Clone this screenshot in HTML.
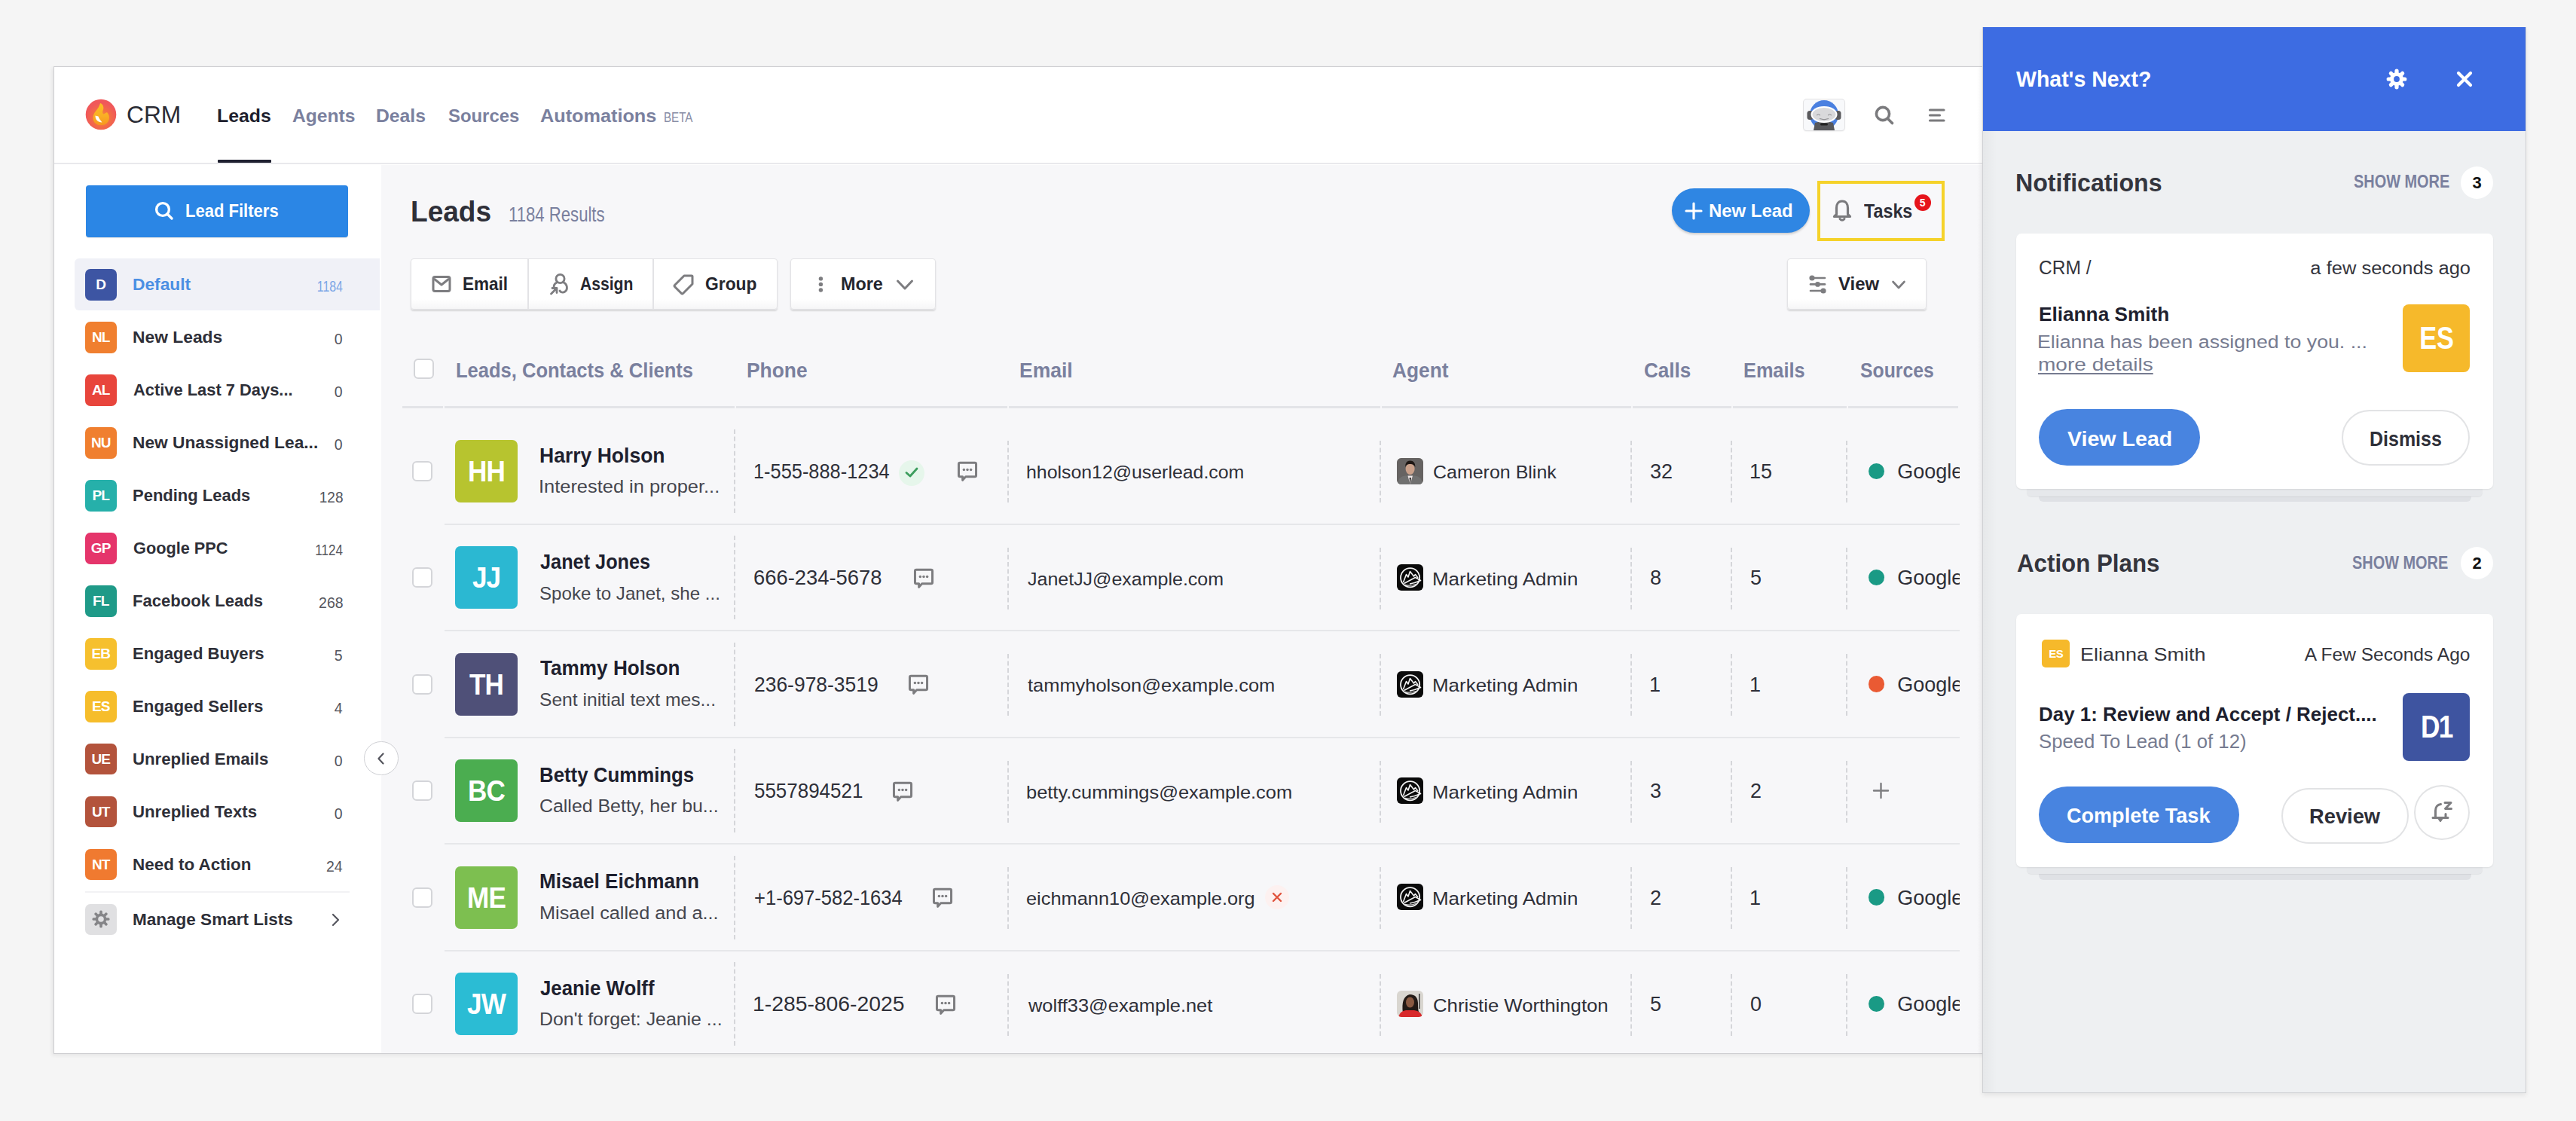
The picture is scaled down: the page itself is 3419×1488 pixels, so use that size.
<!DOCTYPE html>
<html><head><meta charset="utf-8"><style>
html,body{margin:0;padding:0;width:3419px;height:1488px;overflow:hidden;background:#f5f5f5}
body{position:relative;font-family:"Liberation Sans",sans-serif}
.r{position:absolute;display:block}
.t{position:absolute;white-space:nowrap;font-family:"Liberation Sans",sans-serif}
.ab{position:absolute;color:#fff;font-weight:700;text-align:center;font-family:"Liberation Sans",sans-serif;letter-spacing:-0.5px}
.ab.big{font-size:39px;letter-spacing:-1px;transform:scaleX(.9)}
.btn{position:absolute;box-sizing:border-box;background:linear-gradient(to bottom,#ffffff 0%,#ffffff 80%,#f6f6f7 100%);border:1.5px solid #e3e3e6;border-radius:4px;box-shadow:0 2px 2px rgba(0,0,0,.13)}
.cb{position:absolute;width:27px;height:27px;box-sizing:border-box;border:2px solid #d4d5d9;border-radius:6px;background:#fff}
.dv{position:absolute;width:0;border-left:2px dashed #d5d6da}
.clip{position:absolute;overflow:hidden}
</style></head><body>
<div class="r" style="left:0.00px;top:0.00px;width:3419.00px;height:1488.00px;background:#f5f5f5"></div>
<div class="r" style="left:71px;top:88px;width:2569px;height:1311px;background:#cdcdd0;box-shadow:-2px 2px 5px rgba(0,0,0,.07)"></div>
<div class="r" style="left:72.00px;top:89.00px;width:2568.00px;height:1309.00px;background:#ffffff"></div>
<div class="r" style="left:72.00px;top:216.30px;width:2560.00px;height:2.00px;background:#e9e9ec"></div>
<div class="r" style="left:72.00px;top:218.50px;width:434.00px;height:1179.50px;background:#ffffff"></div>
<div class="r" style="left:506.00px;top:218.50px;width:2126.00px;height:1179.50px;background:#f7f7f9"></div>
<svg class="r" style="left:112.50px;top:130.50px;width:42.00px;height:42.00px" viewBox="0 0 42 42">
<defs><linearGradient id="fl" x1="0" y1="0" x2="0" y2="1"><stop offset="0%" stop-color="#fbbf24"/><stop offset="60%" stop-color="#f9ad25"/><stop offset="100%" stop-color="#f7961e"/></linearGradient>
<radialGradient id="lc" cx="52%" cy="62%" r="50%"><stop offset="0%" stop-color="#f7a030"/><stop offset="55%" stop-color="#f36d45"/><stop offset="100%" stop-color="#f0585a"/></radialGradient></defs>
<circle cx="21" cy="21" r="20.3" fill="url(#lc)"/>
<path d="M20 6 C24 7 25.5 12 23.5 16 C22.8 17.8 23 19.5 24.5 20.5 C26 19.5 27.5 18.8 29 18 C32.5 21.5 33 27.5 30 31 C27.5 34.5 23 35.5 19 35 C14 34.5 10.5 30.5 10.5 25.5 C10.5 19 16 15 18 11 C19 9 19.5 7.5 20 6 Z" fill="url(#fl)"/>
<path d="M13.5 22.5 C13.5 28 17 31.5 22.5 31.5 C20.5 29 18.5 26.5 17.5 23.5 Z" fill="#ffffff"/>
</svg>
<div class="t " id="t1" style="left:168.36px;top:136.98px;font-size:30.50px;line-height:30.50px;font-weight:400;color:#2b2c35;letter-spacing:0.000px;;transform:scaleX(1.0386);transform-origin:left">CRM</div>
<div class="t " id="t2" style="left:288.00px;top:141.77px;font-size:24.84px;line-height:24.84px;font-weight:700;color:#1e1f2e;letter-spacing:0.000px;;transform:scaleX(1.0007);transform-origin:left">Leads</div>
<div class="t " id="t3" style="left:388.00px;top:141.77px;font-size:24.84px;line-height:24.84px;font-weight:700;color:#7a809e;letter-spacing:0.000px;;transform:scaleX(0.9923);transform-origin:left">Agents</div>
<div class="t " id="t4" style="left:499.40px;top:141.77px;font-size:24.84px;line-height:24.84px;font-weight:700;color:#7a809e;letter-spacing:0.000px;;transform:scaleX(0.9962);transform-origin:left">Deals</div>
<div class="t " id="t5" style="left:595.00px;top:141.77px;font-size:24.84px;line-height:24.84px;font-weight:700;color:#7a809e;letter-spacing:0.000px;;transform:scaleX(0.9622);transform-origin:left">Sources</div>
<div class="t " id="t6" style="left:717.00px;top:141.77px;font-size:24.84px;line-height:24.84px;font-weight:700;color:#7a809e;letter-spacing:0.000px;;transform:scaleX(1.0171);transform-origin:left">Automations</div>
<div class="t " id="t7" style="left:881.10px;top:146.60px;font-size:18.90px;line-height:18.90px;font-weight:400;color:#888ea6;letter-spacing:0.000px;;transform:scaleX(0.8028);transform-origin:left">BETA</div>
<div class="r" style="left:289.00px;top:212.00px;width:71.00px;height:4.00px;background:#1f2030;border-radius:1px"></div>
<div class="r" style="left:2393.5px;top:131.7px;width:54px;height:41px;border-radius:4px;background:#f8f9fb;box-shadow:0 0 0 1px #e2e2e4, 0 1px 2px rgba(0,0,0,.15);overflow:hidden"></div>
<svg class="r" style="left:2393.50px;top:131.70px;width:54.00px;height:41.00px" viewBox="0 0 54 41">
<defs><clipPath id="bx"><rect x="0" y="0" width="54" height="41" rx="4"/></clipPath></defs>
<g clip-path="url(#bx)">
<ellipse cx="27" cy="20.5" rx="19" ry="19.5" fill="#4a80e0"/>
<path d="M13 41 L15 31 Q27 27 39 31 L41 41 Z" fill="#58585b"/>
<rect x="4.5" y="15" width="8" height="12" rx="3.5" fill="#5a5a5d"/>
<rect x="41.5" y="15" width="8" height="12" rx="3.5" fill="#5a5a5d"/>
<ellipse cx="27" cy="20" rx="17.5" ry="11" fill="#ffffff"/>
<ellipse cx="27" cy="20" rx="15.5" ry="9" fill="#d9d9db"/>
<path d="M17 21 Q19.5 18.5 22 21 M32 21 Q34.5 18.5 37 21" stroke="#8a8a8d" stroke-width="1" fill="none"/>
<path d="M21 25.5 Q27 28 33 25.5" stroke="#8a8a8d" stroke-width="1" fill="none"/>
<rect x="22" y="31.5" width="10" height="3" rx="1.5" fill="#222"/>
</g>
</svg>
<svg class="r" style="left:2484.00px;top:136.00px;width:32.00px;height:32.00px" viewBox="0 0 32 32"><circle cx="15" cy="15" r="8.6" stroke="#7a7a7d" stroke-width="3.6" fill="none"/><line x1="21.5" y1="21.5" x2="27.5" y2="27.5" stroke="#7a7a7d" stroke-width="3.6" stroke-linecap="round"/></svg>
<svg class="r" style="left:2558.00px;top:140.00px;width:26.00px;height:26.00px" viewBox="0 0 26 26"><line x1="3.5" y1="6" x2="22" y2="6" stroke="#7a7a7d" stroke-width="3.2" stroke-linecap="round"/><line x1="3.5" y1="13" x2="16.5" y2="13" stroke="#7a7a7d" stroke-width="3.2" stroke-linecap="round"/><line x1="3.5" y1="20" x2="22" y2="20" stroke="#7a7a7d" stroke-width="3.2" stroke-linecap="round"/></svg>
<div class="r" style="left:113.60px;top:245.70px;width:348.00px;height:69.30px;background:#2b86e5;border-radius:4px;box-shadow:0 1px 1px rgba(0,0,0,.12)"></div>
<svg class="r" style="left:202.00px;top:264.00px;width:32.00px;height:32.00px" viewBox="0 0 32 32"><circle cx="14" cy="14" r="8.4" stroke="#fff" stroke-width="3.4" fill="none"/><line x1="20" y1="20" x2="26" y2="26" stroke="#fff" stroke-width="3.4" stroke-linecap="round"/></svg>
<div class="t " id="t8" style="left:246.06px;top:269.19px;font-size:23.40px;line-height:23.40px;font-weight:700;color:#ffffff;letter-spacing:0.000px;;transform:scaleX(0.9418);transform-origin:left">Lead Filters</div>
<div class="r" style="left:99.00px;top:343.00px;width:405.00px;height:69.30px;background:#f0f1f7;border-radius:6px 0 0 6px"></div>
<div class="r" style="left:113.00px;top:357.40px;width:41.60px;height:41.60px;background:#3d55a3;border-radius:7px"></div>
<div class="ab" style="left:113px;top:357.40px;width:41.6px;height:41.6px;line-height:41.6px;font-size:19px">D</div>
<div class="t " id="t9" style="left:175.68px;top:367.18px;font-size:22.23px;line-height:22.23px;font-weight:700;color:#4b8fe3;letter-spacing:0.000px;;transform:scaleX(1.0240);transform-origin:left">Default</div>
<div class="t " id="t10" style="right:2964.33px;top:371.49px;font-size:19.50px;line-height:19.50px;font-weight:400;color:#7ba6e6;letter-spacing:0.000px;;transform:scaleX(0.8153);transform-origin:right">1184</div>
<div class="r" style="left:113.00px;top:427.34px;width:41.60px;height:41.60px;background:#f07f2f;border-radius:7px"></div>
<div class="ab" style="left:113px;top:427.34px;width:41.6px;height:41.6px;line-height:41.6px;font-size:19px;letter-spacing:-0.8px">NL</div>
<div class="t " id="t11" style="left:175.67px;top:437.12px;font-size:22.23px;line-height:22.23px;font-weight:700;color:#2e2f38;letter-spacing:0.000px;;transform:scaleX(1.0269);transform-origin:left">New Leads</div>
<div class="t " id="t12" style="right:2964.36px;top:441.23px;font-size:19.50px;line-height:19.50px;font-weight:400;color:#55565e;letter-spacing:0.000px;">0</div>
<div class="r" style="left:113.00px;top:497.28px;width:41.60px;height:41.60px;background:#e8453c;border-radius:7px"></div>
<div class="ab" style="left:113px;top:497.28px;width:41.6px;height:41.6px;line-height:41.6px;font-size:19px;letter-spacing:-0.8px">AL</div>
<div class="t " id="t13" style="left:176.70px;top:507.06px;font-size:22.23px;line-height:22.23px;font-weight:700;color:#2e2f38;letter-spacing:0.000px;;transform:scaleX(0.9845);transform-origin:left">Active Last 7 Days...</div>
<div class="t " id="t14" style="right:2964.36px;top:511.17px;font-size:19.50px;line-height:19.50px;font-weight:400;color:#55565e;letter-spacing:0.000px;">0</div>
<div class="r" style="left:113.00px;top:567.22px;width:41.60px;height:41.60px;background:#f07f2f;border-radius:7px"></div>
<div class="ab" style="left:113px;top:567.22px;width:41.6px;height:41.6px;line-height:41.6px;font-size:19px;letter-spacing:-0.8px">NU</div>
<div class="t " id="t15" style="left:175.68px;top:577.00px;font-size:22.23px;line-height:22.23px;font-weight:700;color:#2e2f38;letter-spacing:0.000px;;transform:scaleX(1.0226);transform-origin:left">New Unassigned Lea...</div>
<div class="t " id="t16" style="right:2964.36px;top:581.11px;font-size:19.50px;line-height:19.50px;font-weight:400;color:#55565e;letter-spacing:0.000px;">0</div>
<div class="r" style="left:113.00px;top:637.16px;width:41.60px;height:41.60px;background:#26b0aa;border-radius:7px"></div>
<div class="ab" style="left:113px;top:637.16px;width:41.6px;height:41.6px;line-height:41.6px;font-size:19px;letter-spacing:-0.8px">PL</div>
<div class="t " id="t17" style="left:175.71px;top:646.94px;font-size:22.23px;line-height:22.23px;font-weight:700;color:#2e2f38;letter-spacing:0.000px;;transform:scaleX(0.9893);transform-origin:left">Pending Leads</div>
<div class="t " id="t18" style="right:2963.37px;top:651.05px;font-size:19.50px;line-height:19.50px;font-weight:400;color:#55565e;letter-spacing:0.000px;;transform:scaleX(0.9775);transform-origin:right">128</div>
<div class="r" style="left:113.00px;top:707.10px;width:41.60px;height:41.60px;background:#e5356b;border-radius:7px"></div>
<div class="ab" style="left:113px;top:707.10px;width:41.6px;height:41.6px;line-height:41.6px;font-size:19px;letter-spacing:-0.8px">GP</div>
<div class="t " id="t19" style="left:176.70px;top:716.88px;font-size:22.23px;line-height:22.23px;font-weight:700;color:#2e2f38;letter-spacing:0.000px;;transform:scaleX(0.9779);transform-origin:left">Google PPC</div>
<div class="t " id="t20" style="right:2964.34px;top:720.99px;font-size:19.50px;line-height:19.50px;font-weight:400;color:#55565e;letter-spacing:0.000px;;transform:scaleX(0.8762);transform-origin:right">1124</div>
<div class="r" style="left:113.00px;top:777.04px;width:41.60px;height:41.60px;background:#1f9a88;border-radius:7px"></div>
<div class="ab" style="left:113px;top:777.04px;width:41.6px;height:41.6px;line-height:41.6px;font-size:19px;letter-spacing:-0.8px">FL</div>
<div class="t " id="t21" style="left:175.71px;top:786.82px;font-size:22.23px;line-height:22.23px;font-weight:700;color:#2e2f38;letter-spacing:0.000px;;transform:scaleX(0.9934);transform-origin:left">Facebook Leads</div>
<div class="t " id="t22" style="right:2963.36px;top:790.93px;font-size:19.50px;line-height:19.50px;font-weight:400;color:#55565e;letter-spacing:0.000px;">268</div>
<div class="r" style="left:113.00px;top:846.98px;width:41.60px;height:41.60px;background:#f6c02e;border-radius:7px"></div>
<div class="ab" style="left:113px;top:846.98px;width:41.6px;height:41.6px;line-height:41.6px;font-size:19px;letter-spacing:-0.8px">EB</div>
<div class="t " id="t23" style="left:175.70px;top:856.76px;font-size:22.23px;line-height:22.23px;font-weight:700;color:#2e2f38;letter-spacing:0.000px;;transform:scaleX(0.9956);transform-origin:left">Engaged Buyers</div>
<div class="t " id="t24" style="right:2964.36px;top:860.87px;font-size:19.50px;line-height:19.50px;font-weight:400;color:#55565e;letter-spacing:0.000px;">5</div>
<div class="r" style="left:113.00px;top:916.92px;width:41.60px;height:41.60px;background:#f6bd2b;border-radius:7px"></div>
<div class="ab" style="left:113px;top:916.92px;width:41.6px;height:41.6px;line-height:41.6px;font-size:19px;letter-spacing:-0.8px">ES</div>
<div class="t " id="t25" style="left:175.70px;top:926.70px;font-size:22.23px;line-height:22.23px;font-weight:700;color:#2e2f38;letter-spacing:0.000px;;transform:scaleX(1.0028);transform-origin:left">Engaged Sellers</div>
<div class="t " id="t26" style="right:2964.36px;top:930.81px;font-size:19.50px;line-height:19.50px;font-weight:400;color:#55565e;letter-spacing:0.000px;">4</div>
<div class="r" style="left:113.00px;top:986.86px;width:41.60px;height:41.60px;background:#b3533c;border-radius:7px"></div>
<div class="ab" style="left:113px;top:986.86px;width:41.6px;height:41.6px;line-height:41.6px;font-size:19px;letter-spacing:-0.8px">UE</div>
<div class="t " id="t27" style="left:175.70px;top:996.64px;font-size:22.23px;line-height:22.23px;font-weight:700;color:#2e2f38;letter-spacing:0.000px;;transform:scaleX(0.9999);transform-origin:left">Unreplied Emails</div>
<div class="t " id="t28" style="right:2964.36px;top:1000.75px;font-size:19.50px;line-height:19.50px;font-weight:400;color:#55565e;letter-spacing:0.000px;">0</div>
<div class="r" style="left:113.00px;top:1056.80px;width:41.60px;height:41.60px;background:#b3533c;border-radius:7px"></div>
<div class="ab" style="left:113px;top:1056.80px;width:41.6px;height:41.6px;line-height:41.6px;font-size:19px;letter-spacing:-0.8px">UT</div>
<div class="t " id="t29" style="left:175.70px;top:1066.58px;font-size:22.23px;line-height:22.23px;font-weight:700;color:#2e2f38;letter-spacing:0.000px;;transform:scaleX(1.0001);transform-origin:left">Unreplied Texts</div>
<div class="t " id="t30" style="right:2964.36px;top:1070.69px;font-size:19.50px;line-height:19.50px;font-weight:400;color:#55565e;letter-spacing:0.000px;">0</div>
<div class="r" style="left:113.00px;top:1126.74px;width:41.60px;height:41.60px;background:#f07a30;border-radius:7px"></div>
<div class="ab" style="left:113px;top:1126.74px;width:41.6px;height:41.6px;line-height:41.6px;font-size:19px;letter-spacing:-0.8px">NT</div>
<div class="t " id="t31" style="left:175.69px;top:1136.52px;font-size:22.23px;line-height:22.23px;font-weight:700;color:#2e2f38;letter-spacing:0.000px;;transform:scaleX(1.0090);transform-origin:left">Need to Action</div>
<div class="t " id="t32" style="right:2964.36px;top:1140.63px;font-size:19.50px;line-height:19.50px;font-weight:400;color:#55565e;letter-spacing:0.000px;">24</div>
<div class="r" style="left:112.60px;top:1182.70px;width:351.40px;height:2.00px;background:#f2f2f4"></div>
<div class="r" style="left:113.10px;top:1199.90px;width:41.50px;height:41.50px;background:#e0e0e2;border-radius:7px"></div>
<svg class="r" style="left:121.70px;top:1208.00px;width:24.00px;height:24.00px" viewBox="0 0 24 24"><g fill="#858588"><rect x="10.2" y="0.5" width="3.6" height="6" rx="1.6" transform="rotate(0 12 12)"/><rect x="10.2" y="0.5" width="3.6" height="6" rx="1.6" transform="rotate(45 12 12)"/><rect x="10.2" y="0.5" width="3.6" height="6" rx="1.6" transform="rotate(90 12 12)"/><rect x="10.2" y="0.5" width="3.6" height="6" rx="1.6" transform="rotate(135 12 12)"/><rect x="10.2" y="0.5" width="3.6" height="6" rx="1.6" transform="rotate(180 12 12)"/><rect x="10.2" y="0.5" width="3.6" height="6" rx="1.6" transform="rotate(225 12 12)"/><rect x="10.2" y="0.5" width="3.6" height="6" rx="1.6" transform="rotate(270 12 12)"/><rect x="10.2" y="0.5" width="3.6" height="6" rx="1.6" transform="rotate(315 12 12)"/></g><circle cx="12" cy="12" r="7.4" fill="#858588"/><circle cx="12" cy="12" r="3.8" fill="#e0e0e2"/></svg>
<div class="t " id="t33" style="left:175.69px;top:1209.78px;font-size:22.23px;line-height:22.23px;font-weight:700;color:#2e2f38;letter-spacing:0.000px;;transform:scaleX(1.0137);transform-origin:left">Manage Smart Lists</div>
<svg class="r" style="left:438.00px;top:1210.00px;width:16.00px;height:22.00px" viewBox="0 0 16 22"><path d="M4 4 L11 11 L4 18" stroke="#55565e" stroke-width="2.2" fill="none" stroke-linecap="round" stroke-linejoin="round"/></svg>
<div class="r" style="left:483px;top:983.6px;width:45.6px;height:45.6px;border-radius:50%;background:#fff;box-sizing:border-box;border:1.8px solid #cfd0d4"></div>
<svg class="r" style="left:494.00px;top:995.00px;width:24.00px;height:24.00px" viewBox="0 0 24 24"><path d="M14.5 5.5 L8.5 12 L14.5 18.5" stroke="#55565e" stroke-width="2.2" fill="none" stroke-linecap="round" stroke-linejoin="round"/></svg>
<div class="t " id="t34" style="left:544.71px;top:261.28px;font-size:39.24px;line-height:39.24px;font-weight:700;color:#2e2f38;letter-spacing:0.000px;;transform:scaleX(0.9442);transform-origin:left">Leads</div>
<div class="t " id="t35" style="left:674.75px;top:271.80px;font-size:26.82px;line-height:26.82px;font-weight:400;color:#7a809e;letter-spacing:0.000px;;transform:scaleX(0.8257);transform-origin:left">1184 Results</div>
<div class="r" style="left:2219.00px;top:250.00px;width:183.00px;height:59.00px;background:#2f86e3;border-radius:30px;box-shadow:0 2px 3px rgba(0,0,0,.18)"></div>
<svg class="r" style="left:2234.00px;top:267.00px;width:28.00px;height:26.00px" viewBox="0 0 28 26"><line x1="14" y1="3" x2="14" y2="23" stroke="#fff" stroke-width="3.2" stroke-linecap="round"/><line x1="4" y1="13" x2="24" y2="13" stroke="#fff" stroke-width="3.2" stroke-linecap="round"/></svg>
<div class="t " id="t36" style="left:2268.42px;top:268.03px;font-size:24.30px;line-height:24.30px;font-weight:700;color:#ffffff;letter-spacing:0.000px;;transform:scaleX(0.9841);transform-origin:left">New Lead</div>
<div class="r" style="left:2411.5px;top:240px;width:169.5px;height:80px;box-sizing:border-box;border:4px solid #f5d22a;background:#f8f8fa"></div>
<svg class="r" style="left:2430.00px;top:262.00px;width:30.00px;height:34.00px" viewBox="0 0 30 34"><path d="M15 5 C9.5 5 7.5 9.5 7.5 14 L7.5 22.5 L4.5 25.5 L25.5 25.5 L22.5 22.5 L22.5 14 C22.5 9.5 20.5 5 15 5 Z" stroke="#7a7a7d" stroke-width="3.2" fill="none" stroke-linejoin="round"/><path d="M12 28.5 Q15 32 18 28.5" stroke="#7a7a7d" stroke-width="3" fill="none" stroke-linecap="round"/></svg>
<div class="t " id="t37" style="left:2474.00px;top:268.07px;font-size:25.20px;line-height:25.20px;font-weight:700;color:#2e2f38;letter-spacing:0.000px;;transform:scaleX(0.9250);transform-origin:left">Tasks</div>
<div class="r" style="left:2540.6px;top:257.7px;width:22px;height:22px;border-radius:50%;background:#e6141b;color:#fff;font-size:14px;font-weight:700;line-height:22px;text-align:center">5</div>
<div class="btn" style="left:545px;top:343.3px;width:487px;height:67.7px"></div>
<div class="r" style="left:699.50px;top:344.00px;width:2.00px;height:67.00px;background:#e3e3e6"></div>
<div class="r" style="left:865.50px;top:344.00px;width:2.00px;height:67.00px;background:#e3e3e6"></div>
<svg class="r" style="left:572.00px;top:365.00px;width:28.00px;height:25.00px" viewBox="0 0 28 25"><rect x="3" y="2.5" width="22" height="19" rx="2.2" stroke="#7d7d80" stroke-width="3" fill="none"/><path d="M4 5 L14 13 L24 5" stroke="#7d7d80" stroke-width="3" fill="none" stroke-linejoin="round"/></svg>
<div class="t " id="t38" style="left:614.03px;top:366.42px;font-size:23.13px;line-height:23.13px;font-weight:700;color:#25262e;letter-spacing:0.000px;;transform:scaleX(0.9735);transform-origin:left">Email</div>
<svg class="r" style="left:728.00px;top:362.00px;width:28.00px;height:31.00px" viewBox="0 0 28 31"><circle cx="15.5" cy="8" r="5.6" stroke="#7d7d80" stroke-width="2.8" fill="none"/><path d="M11 13 C6.5 15 6 20 9 22 M20 13 C25 15 26 22 22 25 C19 27 16 26 15 24" stroke="#7d7d80" stroke-width="2.8" fill="none" stroke-linecap="round"/><path d="M3.5 28 L11 20.5 M5 20.5 L11 20.5 L11 26.5" stroke="#7d7d80" stroke-width="2.8" fill="none" stroke-linecap="round" stroke-linejoin="round"/></svg>
<div class="t " id="t39" style="left:769.60px;top:366.42px;font-size:23.13px;line-height:23.13px;font-weight:700;color:#25262e;letter-spacing:0.000px;;transform:scaleX(0.9135);transform-origin:left">Assign</div>
<svg class="r" style="left:893.00px;top:362.00px;width:30.00px;height:30.00px" viewBox="0 0 30 30"><path d="M15 4 L25 4 Q26 4 26 5 L26 15 L13.5 27.5 Q12.5 28.5 11.5 27.5 L2.5 18.5 Q1.5 17.5 2.5 16.5 Z" stroke="#7d7d80" stroke-width="3" fill="none" stroke-linejoin="round"/></svg>
<div class="t " id="t40" style="left:936.30px;top:366.42px;font-size:23.13px;line-height:23.13px;font-weight:700;color:#25262e;letter-spacing:0.000px;;transform:scaleX(0.9879);transform-origin:left">Group</div>
<div class="btn" style="left:1048.8px;top:343.3px;width:192.8px;height:67.7px"></div>
<svg class="r" style="left:1083.00px;top:364.00px;width:13.00px;height:26.00px" viewBox="0 0 13 26"><circle cx="6.4" cy="5.9" r="2.7" fill="#7d7d80"/><circle cx="6.4" cy="13.4" r="2.7" fill="#7d7d80"/><circle cx="6.4" cy="21.0" r="2.7" fill="#7d7d80"/></svg>
<div class="t " id="t41" style="left:1115.99px;top:366.42px;font-size:23.13px;line-height:23.13px;font-weight:700;color:#25262e;letter-spacing:0.000px;;transform:scaleX(1.0112);transform-origin:left">More</div>
<svg class="r" style="left:1187.00px;top:368.00px;width:28.00px;height:20.00px" viewBox="0 0 28 20"><path d="M4.5 5 L14 15 L23.5 5" stroke="#7d7d80" stroke-width="3" fill="none" stroke-linecap="round" stroke-linejoin="round"/></svg>
<div class="btn" style="left:2372px;top:343.3px;width:185px;height:67.7px"></div>
<svg class="r" style="left:2398.00px;top:362.00px;width:28.00px;height:31.00px" viewBox="0 0 28 31"><g stroke="#7d7d80" stroke-width="2.6" stroke-linecap="round"><line x1="6" y1="7" x2="24" y2="7"/><line x1="5" y1="15.4" x2="24" y2="15.4"/><line x1="5" y1="24" x2="23" y2="24"/></g><circle cx="7" cy="7" r="3.6" fill="#7d7d80"/><circle cx="14.5" cy="15.4" r="3.4" fill="#7d7d80"/><circle cx="22" cy="24" r="3.6" fill="#7d7d80"/></svg>
<div class="t " id="t42" style="left:2440.30px;top:366.42px;font-size:23.13px;line-height:23.13px;font-weight:700;color:#25262e;letter-spacing:0.000px;;transform:scaleX(1.0339);transform-origin:left">View</div>
<svg class="r" style="left:2508.00px;top:368.00px;width:24.00px;height:20.00px" viewBox="0 0 24 20"><path d="M4.5 6 L12 14 L19.5 6" stroke="#7d7d80" stroke-width="2.6" fill="none" stroke-linecap="round" stroke-linejoin="round"/></svg>
<div class="cb" style="left:548.5px;top:475.7px"></div>
<div class="t " id="t43" style="left:604.70px;top:476.70px;font-size:28.35px;line-height:28.35px;font-weight:700;color:#7a809e;letter-spacing:0.000px;;transform:scaleX(0.9009);transform-origin:left">Leads, Contacts &amp; Clients</div>
<div class="t " id="t44" style="left:990.87px;top:476.70px;font-size:28.35px;line-height:28.35px;font-weight:700;color:#7a809e;letter-spacing:0.000px;;transform:scaleX(0.9299);transform-origin:left">Phone</div>
<div class="t " id="t45" style="left:1353.07px;top:476.70px;font-size:28.35px;line-height:28.35px;font-weight:700;color:#7a809e;letter-spacing:0.000px;;transform:scaleX(0.9348);transform-origin:left">Email</div>
<div class="t " id="t46" style="left:1847.80px;top:476.70px;font-size:28.35px;line-height:28.35px;font-weight:700;color:#7a809e;letter-spacing:0.000px;;transform:scaleX(0.9275);transform-origin:left">Agent</div>
<div class="t " id="t47" style="left:2181.88px;top:476.70px;font-size:28.35px;line-height:28.35px;font-weight:700;color:#7a809e;letter-spacing:0.000px;;transform:scaleX(0.9199);transform-origin:left">Calls</div>
<div class="t " id="t48" style="left:2313.91px;top:476.70px;font-size:28.35px;line-height:28.35px;font-weight:700;color:#7a809e;letter-spacing:0.000px;;transform:scaleX(0.8927);transform-origin:left">Emails</div>
<div class="t " id="t49" style="left:2468.70px;top:476.70px;font-size:28.35px;line-height:28.35px;font-weight:700;color:#7a809e;letter-spacing:0.000px;;transform:scaleX(0.8732);transform-origin:left">Sources</div>
<div class="r" style="left:534.00px;top:538.50px;width:54.00px;height:3.00px;background:#e3e4e8"></div>
<div class="r" style="left:590.00px;top:538.50px;width:385.00px;height:3.00px;background:#e3e4e8"></div>
<div class="r" style="left:977.00px;top:538.50px;width:360.00px;height:3.00px;background:#e3e4e8"></div>
<div class="r" style="left:1339.00px;top:538.50px;width:492.50px;height:3.00px;background:#e3e4e8"></div>
<div class="r" style="left:1833.50px;top:538.50px;width:331.50px;height:3.00px;background:#e3e4e8"></div>
<div class="r" style="left:2167.00px;top:538.50px;width:131.00px;height:3.00px;background:#e3e4e8"></div>
<div class="r" style="left:2300.00px;top:538.50px;width:151.00px;height:3.00px;background:#e3e4e8"></div>
<div class="r" style="left:2453.00px;top:538.50px;width:145.70px;height:3.00px;background:#e3e4e8"></div>
<div class="cb" style="left:546.8px;top:611.90px"></div>
<div class="r" style="left:603.90px;top:583.80px;width:83.10px;height:83.20px;background:#b7c42f;border-radius:7px"></div>
<div class="ab big" style="left:603.9px;top:583.80px;width:83.1px;height:83.2px;line-height:83.2px">HH</div>
<div class="t " id="t50" style="left:715.92px;top:591.54px;font-size:27.00px;line-height:27.00px;font-weight:700;color:#1e1f2e;letter-spacing:0.000px;;transform:scaleX(0.9824);transform-origin:left">Harry Holson</div>
<div class="t " id="t51" style="left:714.75px;top:635.06px;font-size:23.67px;line-height:23.67px;font-weight:400;color:#45464e;letter-spacing:0.000px;;transform:scaleX(1.0746);transform-origin:left">Interested in proper...</div>
<div class="dv" style="left:974px;top:569.80px;height:111px"></div>
<div class="dv" style="left:1336.5px;top:585.30px;height:82px"></div>
<div class="dv" style="left:1831.0px;top:585.30px;height:82px"></div>
<div class="dv" style="left:2164.3px;top:585.30px;height:82px"></div>
<div class="dv" style="left:2297.0px;top:585.30px;height:82px"></div>
<div class="dv" style="left:2450.0px;top:585.30px;height:82px"></div>
<div class="r" style="left:590.00px;top:695.00px;width:2010.70px;height:2.00px;background:#e6e7ea"></div>
<div class="t " id="t52" style="left:999.62px;top:613.04px;font-size:27.00px;line-height:27.00px;font-weight:400;color:#2e2f38;letter-spacing:0.000px;;transform:scaleX(0.9399);transform-origin:left">1-555-888-1234</div>
<div class="r" style="left:1193px;top:611.30px;width:34px;height:34px;border-radius:50%;background:#e6f6eb"></div>
<svg class="r" style="left:1199.00px;top:615.80px;width:22.00px;height:22.00px" viewBox="0 0 22 22"><path d="M4 11.5 L9 16 L18 6" stroke="#3c9d5d" stroke-width="2.8" fill="none" stroke-linecap="round" stroke-linejoin="round"/></svg>
<svg class="r" style="left:1268.70px;top:612.30px;width:30px;height:30px" viewBox="0 0 26 26"><path d="M3 3.5 Q3 2 4.5 2 L21.5 2 Q23 2 23 3.5 L23 16.5 Q23 18 21.5 18 L11 18 L7.5 22 L7.5 18 L4.5 18 Q3 18 3 16.5 Z" stroke="#7d7d80" stroke-width="2.6" fill="none" stroke-linejoin="round"/><circle cx="9" cy="10" r="1.5" fill="#7d7d80"/><circle cx="13" cy="10" r="1.5" fill="#7d7d80"/><circle cx="17" cy="10" r="1.5" fill="#7d7d80"/></svg>
<div class="t " id="t53" style="left:1362.48px;top:615.33px;font-size:24.30px;line-height:24.30px;font-weight:400;color:#2e2f38;letter-spacing:0.000px;;transform:scaleX(1.0235);transform-origin:left">hholson12@userlead.com</div>
<svg class="r" style="left:1854.00px;top:607.70px;width:35.00px;height:35.00px" viewBox="0 0 35 35"><defs><clipPath id="cc0"><rect width="35" height="35" rx="6"/></clipPath></defs><g clip-path="url(#cc0)"><rect width="35" height="35" fill="#5f5d5c"/><rect x="0" y="0" width="35" height="35" fill="#6d6a68" opacity=".5"/><ellipse cx="17.6" cy="14.5" rx="6" ry="7.5" fill="#c9a08a"/><path d="M11 12 Q11 3.5 17.6 3.5 Q24.5 3.5 24.5 12 Q22 7.5 17.6 8 Q13 7.5 11 12 Z" fill="#1e1714"/><path d="M1 35 Q2 24 11 23.5 L24 23.5 Q33 24 34 35 Z" fill="#707070"/><path d="M14.5 23.5 L17.6 35 L21 23.5 Z" fill="#efe7e7"/><path d="M16.6 26 L17.6 35 L18.8 26 Z" fill="#111"/></g></svg>
<div class="t " id="t54" style="left:1901.97px;top:615.33px;font-size:24.30px;line-height:24.30px;font-weight:400;color:#2e2f38;letter-spacing:0.000px;;transform:scaleX(1.0277);transform-origin:left">Cameron Blink</div>
<div class="t " id="t55" style="left:2190.00px;top:613.04px;font-size:27.00px;line-height:27.00px;font-weight:400;color:#2e2f38;letter-spacing:0.000px;">32</div>
<div class="t " id="t56" style="left:2322.00px;top:613.04px;font-size:27.00px;line-height:27.00px;font-weight:400;color:#2e2f38;letter-spacing:0.000px;">15</div>
<div class="r" style="left:2479.6px;top:614.55px;width:21.5px;height:21.5px;border-radius:50%;background:#1a9a85"></div>
<div class="clip" style="left:2510px;top:600.90px;width:90.7px;height:50px"><div class="t" style="left:8.3px;top:12.14px;font-size:27px;line-height:27px;color:#2e2f38">Google</div></div>
<div class="cb" style="left:546.8px;top:753.34px"></div>
<div class="r" style="left:603.90px;top:725.24px;width:83.10px;height:83.20px;background:#2bb8d2;border-radius:7px"></div>
<div class="ab big" style="left:603.9px;top:725.24px;width:83.1px;height:83.2px;line-height:83.2px">JJ</div>
<div class="t " id="t57" style="left:716.90px;top:732.98px;font-size:27.00px;line-height:27.00px;font-weight:700;color:#1e1f2e;letter-spacing:0.000px;;transform:scaleX(0.9365);transform-origin:left">Janet Jones</div>
<div class="t " id="t58" style="left:715.88px;top:776.50px;font-size:23.67px;line-height:23.67px;font-weight:400;color:#45464e;letter-spacing:0.000px;;transform:scaleX(1.0192);transform-origin:left">Spoke to Janet, she ...</div>
<div class="dv" style="left:974px;top:711.24px;height:111px"></div>
<div class="dv" style="left:1336.5px;top:726.74px;height:82px"></div>
<div class="dv" style="left:1831.0px;top:726.74px;height:82px"></div>
<div class="dv" style="left:2164.3px;top:726.74px;height:82px"></div>
<div class="dv" style="left:2297.0px;top:726.74px;height:82px"></div>
<div class="dv" style="left:2450.0px;top:726.74px;height:82px"></div>
<div class="r" style="left:590.00px;top:836.44px;width:2010.70px;height:2.00px;background:#e6e7ea"></div>
<div class="t " id="t59" style="left:1000.49px;top:754.48px;font-size:27.00px;line-height:27.00px;font-weight:400;color:#2e2f38;letter-spacing:0.000px;;transform:scaleX(1.0143);transform-origin:left">666-234-5678</div>
<svg class="r" style="left:1210.90px;top:753.74px;width:30px;height:30px" viewBox="0 0 26 26"><path d="M3 3.5 Q3 2 4.5 2 L21.5 2 Q23 2 23 3.5 L23 16.5 Q23 18 21.5 18 L11 18 L7.5 22 L7.5 18 L4.5 18 Q3 18 3 16.5 Z" stroke="#7d7d80" stroke-width="2.6" fill="none" stroke-linejoin="round"/><circle cx="9" cy="10" r="1.5" fill="#7d7d80"/><circle cx="13" cy="10" r="1.5" fill="#7d7d80"/><circle cx="17" cy="10" r="1.5" fill="#7d7d80"/></svg>
<div class="t " id="t60" style="left:1363.50px;top:756.77px;font-size:24.30px;line-height:24.30px;font-weight:400;color:#2e2f38;letter-spacing:0.000px;;transform:scaleX(1.0284);transform-origin:left">JanetJJ@example.com</div>
<svg class="r" style="left:1854.00px;top:749.14px;width:35.00px;height:35.00px" viewBox="0 0 35 35"><rect width="35" height="35" rx="6" fill="#0a0a0a"/><circle cx="17.6" cy="17.8" r="12.6" stroke="#f2f2f2" stroke-width="1.8" fill="none"/><path d="M8.5 24 L12.5 13.5 L15 17 L17.5 9.5 L22.5 16 L24.5 13.5 L28 18" stroke="#f2f2f2" stroke-width="1.6" fill="none" stroke-linejoin="round"/><path d="M9.5 25.5 Q18 21 24.5 17.5 L31.5 21.5 Q24 25 17 26" stroke="#f2f2f2" stroke-width="1.6" fill="none" stroke-linejoin="round"/><path d="M11 27.5 Q18 29 25 26.5" stroke="#d8d8d8" stroke-width="1.3" fill="none"/></svg>
<div class="t " id="t61" style="left:1900.86px;top:756.77px;font-size:24.30px;line-height:24.30px;font-weight:400;color:#2e2f38;letter-spacing:0.000px;;transform:scaleX(1.0683);transform-origin:left">Marketing Admin</div>
<div class="t " id="t62" style="left:2190.00px;top:754.48px;font-size:27.00px;line-height:27.00px;font-weight:400;color:#2e2f38;letter-spacing:0.000px;">8</div>
<div class="t " id="t63" style="left:2323.00px;top:754.48px;font-size:27.00px;line-height:27.00px;font-weight:400;color:#2e2f38;letter-spacing:0.000px;">5</div>
<div class="r" style="left:2479.6px;top:755.99px;width:21.5px;height:21.5px;border-radius:50%;background:#1a9a85"></div>
<div class="clip" style="left:2510px;top:742.34px;width:90.7px;height:50px"><div class="t" style="left:8.3px;top:12.14px;font-size:27px;line-height:27px;color:#2e2f38">Google</div></div>
<div class="cb" style="left:546.8px;top:894.78px"></div>
<div class="r" style="left:603.90px;top:866.68px;width:83.10px;height:83.20px;background:#4f5078;border-radius:7px"></div>
<div class="ab big" style="left:603.9px;top:866.68px;width:83.1px;height:83.2px;line-height:83.2px">TH</div>
<div class="t " id="t64" style="left:716.90px;top:874.42px;font-size:27.00px;line-height:27.00px;font-weight:700;color:#1e1f2e;letter-spacing:0.000px;;transform:scaleX(0.9688);transform-origin:left">Tammy Holson</div>
<div class="t " id="t65" style="left:715.86px;top:917.94px;font-size:23.67px;line-height:23.67px;font-weight:400;color:#45464e;letter-spacing:0.000px;;transform:scaleX(1.0407);transform-origin:left">Sent initial text mes...</div>
<div class="dv" style="left:974px;top:852.68px;height:111px"></div>
<div class="dv" style="left:1336.5px;top:868.18px;height:82px"></div>
<div class="dv" style="left:1831.0px;top:868.18px;height:82px"></div>
<div class="dv" style="left:2164.3px;top:868.18px;height:82px"></div>
<div class="dv" style="left:2297.0px;top:868.18px;height:82px"></div>
<div class="dv" style="left:2450.0px;top:868.18px;height:82px"></div>
<div class="r" style="left:590.00px;top:977.88px;width:2010.70px;height:2.00px;background:#e6e7ea"></div>
<div class="t " id="t66" style="left:1000.52px;top:895.92px;font-size:27.00px;line-height:27.00px;font-weight:400;color:#2e2f38;letter-spacing:0.000px;;transform:scaleX(0.9794);transform-origin:left">236-978-3519</div>
<svg class="r" style="left:1204.00px;top:895.18px;width:30px;height:30px" viewBox="0 0 26 26"><path d="M3 3.5 Q3 2 4.5 2 L21.5 2 Q23 2 23 3.5 L23 16.5 Q23 18 21.5 18 L11 18 L7.5 22 L7.5 18 L4.5 18 Q3 18 3 16.5 Z" stroke="#7d7d80" stroke-width="2.6" fill="none" stroke-linejoin="round"/><circle cx="9" cy="10" r="1.5" fill="#7d7d80"/><circle cx="13" cy="10" r="1.5" fill="#7d7d80"/><circle cx="17" cy="10" r="1.5" fill="#7d7d80"/></svg>
<div class="t " id="t67" style="left:1363.50px;top:898.21px;font-size:24.30px;line-height:24.30px;font-weight:400;color:#2e2f38;letter-spacing:0.000px;;transform:scaleX(1.0467);transform-origin:left">tammyholson@example.com</div>
<svg class="r" style="left:1854.00px;top:890.58px;width:35.00px;height:35.00px" viewBox="0 0 35 35"><rect width="35" height="35" rx="6" fill="#0a0a0a"/><circle cx="17.6" cy="17.8" r="12.6" stroke="#f2f2f2" stroke-width="1.8" fill="none"/><path d="M8.5 24 L12.5 13.5 L15 17 L17.5 9.5 L22.5 16 L24.5 13.5 L28 18" stroke="#f2f2f2" stroke-width="1.6" fill="none" stroke-linejoin="round"/><path d="M9.5 25.5 Q18 21 24.5 17.5 L31.5 21.5 Q24 25 17 26" stroke="#f2f2f2" stroke-width="1.6" fill="none" stroke-linejoin="round"/><path d="M11 27.5 Q18 29 25 26.5" stroke="#d8d8d8" stroke-width="1.3" fill="none"/></svg>
<div class="t " id="t68" style="left:1900.86px;top:898.21px;font-size:24.30px;line-height:24.30px;font-weight:400;color:#2e2f38;letter-spacing:0.000px;;transform:scaleX(1.0683);transform-origin:left">Marketing Admin</div>
<div class="t " id="t69" style="left:2189.00px;top:895.92px;font-size:27.00px;line-height:27.00px;font-weight:400;color:#2e2f38;letter-spacing:0.000px;">1</div>
<div class="t " id="t70" style="left:2322.00px;top:895.92px;font-size:27.00px;line-height:27.00px;font-weight:400;color:#2e2f38;letter-spacing:0.000px;">1</div>
<div class="r" style="left:2479.6px;top:897.43px;width:21.5px;height:21.5px;border-radius:50%;background:#ea5a33"></div>
<div class="clip" style="left:2510px;top:883.78px;width:90.7px;height:50px"><div class="t" style="left:8.3px;top:12.14px;font-size:27px;line-height:27px;color:#2e2f38">Google</div></div>
<div class="cb" style="left:546.8px;top:1036.22px"></div>
<div class="r" style="left:603.90px;top:1008.12px;width:83.10px;height:83.20px;background:#4bad50;border-radius:7px"></div>
<div class="ab big" style="left:603.9px;top:1008.12px;width:83.1px;height:83.2px;line-height:83.2px">BC</div>
<div class="t " id="t71" style="left:715.94px;top:1015.86px;font-size:27.00px;line-height:27.00px;font-weight:700;color:#1e1f2e;letter-spacing:0.000px;;transform:scaleX(0.9567);transform-origin:left">Betty Cummings</div>
<div class="t " id="t72" style="left:715.85px;top:1059.38px;font-size:23.67px;line-height:23.67px;font-weight:400;color:#45464e;letter-spacing:0.000px;;transform:scaleX(1.0526);transform-origin:left">Called Betty, her bu...</div>
<div class="dv" style="left:974px;top:994.12px;height:111px"></div>
<div class="dv" style="left:1336.5px;top:1009.62px;height:82px"></div>
<div class="dv" style="left:1831.0px;top:1009.62px;height:82px"></div>
<div class="dv" style="left:2164.3px;top:1009.62px;height:82px"></div>
<div class="dv" style="left:2297.0px;top:1009.62px;height:82px"></div>
<div class="dv" style="left:2450.0px;top:1009.62px;height:82px"></div>
<div class="r" style="left:590.00px;top:1119.32px;width:2010.70px;height:2.00px;background:#e6e7ea"></div>
<div class="t " id="t73" style="left:1000.54px;top:1037.36px;font-size:27.00px;line-height:27.00px;font-weight:400;color:#2e2f38;letter-spacing:0.000px;;transform:scaleX(0.9612);transform-origin:left">5557894521</div>
<svg class="r" style="left:1182.70px;top:1036.62px;width:30px;height:30px" viewBox="0 0 26 26"><path d="M3 3.5 Q3 2 4.5 2 L21.5 2 Q23 2 23 3.5 L23 16.5 Q23 18 21.5 18 L11 18 L7.5 22 L7.5 18 L4.5 18 Q3 18 3 16.5 Z" stroke="#7d7d80" stroke-width="2.6" fill="none" stroke-linejoin="round"/><circle cx="9" cy="10" r="1.5" fill="#7d7d80"/><circle cx="13" cy="10" r="1.5" fill="#7d7d80"/><circle cx="17" cy="10" r="1.5" fill="#7d7d80"/></svg>
<div class="t " id="t74" style="left:1362.45px;top:1039.65px;font-size:24.30px;line-height:24.30px;font-weight:400;color:#2e2f38;letter-spacing:0.000px;;transform:scaleX(1.0464);transform-origin:left">betty.cummings@example.com</div>
<svg class="r" style="left:1854.00px;top:1032.02px;width:35.00px;height:35.00px" viewBox="0 0 35 35"><rect width="35" height="35" rx="6" fill="#0a0a0a"/><circle cx="17.6" cy="17.8" r="12.6" stroke="#f2f2f2" stroke-width="1.8" fill="none"/><path d="M8.5 24 L12.5 13.5 L15 17 L17.5 9.5 L22.5 16 L24.5 13.5 L28 18" stroke="#f2f2f2" stroke-width="1.6" fill="none" stroke-linejoin="round"/><path d="M9.5 25.5 Q18 21 24.5 17.5 L31.5 21.5 Q24 25 17 26" stroke="#f2f2f2" stroke-width="1.6" fill="none" stroke-linejoin="round"/><path d="M11 27.5 Q18 29 25 26.5" stroke="#d8d8d8" stroke-width="1.3" fill="none"/></svg>
<div class="t " id="t75" style="left:1900.86px;top:1039.65px;font-size:24.30px;line-height:24.30px;font-weight:400;color:#2e2f38;letter-spacing:0.000px;;transform:scaleX(1.0683);transform-origin:left">Marketing Admin</div>
<div class="t " id="t76" style="left:2190.00px;top:1037.36px;font-size:27.00px;line-height:27.00px;font-weight:400;color:#2e2f38;letter-spacing:0.000px;">3</div>
<div class="t " id="t77" style="left:2323.00px;top:1037.36px;font-size:27.00px;line-height:27.00px;font-weight:400;color:#2e2f38;letter-spacing:0.000px;">2</div>
<svg class="r" style="left:2484.00px;top:1037.12px;width:25.00px;height:25.00px" viewBox="0 0 25 25"><path d="M12.5 3 L12.5 22 M3 12.5 L22 12.5" stroke="#7d7d80" stroke-width="2.4" stroke-linecap="round"/></svg>
<div class="cb" style="left:546.8px;top:1177.66px"></div>
<div class="r" style="left:603.90px;top:1149.56px;width:83.10px;height:83.20px;background:#7dbf50;border-radius:7px"></div>
<div class="ab big" style="left:603.9px;top:1149.56px;width:83.1px;height:83.2px;line-height:83.2px">ME</div>
<div class="t " id="t78" style="left:715.93px;top:1157.30px;font-size:27.00px;line-height:27.00px;font-weight:700;color:#1e1f2e;letter-spacing:0.000px;;transform:scaleX(0.9673);transform-origin:left">Misael Eichmann</div>
<div class="t " id="t79" style="left:715.83px;top:1200.82px;font-size:23.67px;line-height:23.67px;font-weight:400;color:#45464e;letter-spacing:0.000px;;transform:scaleX(1.0694);transform-origin:left">Misael called and a...</div>
<div class="dv" style="left:974px;top:1135.56px;height:111px"></div>
<div class="dv" style="left:1336.5px;top:1151.06px;height:82px"></div>
<div class="dv" style="left:1831.0px;top:1151.06px;height:82px"></div>
<div class="dv" style="left:2164.3px;top:1151.06px;height:82px"></div>
<div class="dv" style="left:2297.0px;top:1151.06px;height:82px"></div>
<div class="dv" style="left:2450.0px;top:1151.06px;height:82px"></div>
<div class="r" style="left:590.00px;top:1260.76px;width:2010.70px;height:2.00px;background:#e6e7ea"></div>
<div class="t " id="t80" style="left:1000.55px;top:1178.80px;font-size:27.00px;line-height:27.00px;font-weight:400;color:#2e2f38;letter-spacing:0.000px;;transform:scaleX(0.9463);transform-origin:left">+1-697-582-1634</div>
<svg class="r" style="left:1236.00px;top:1178.06px;width:30px;height:30px" viewBox="0 0 26 26"><path d="M3 3.5 Q3 2 4.5 2 L21.5 2 Q23 2 23 3.5 L23 16.5 Q23 18 21.5 18 L11 18 L7.5 22 L7.5 18 L4.5 18 Q3 18 3 16.5 Z" stroke="#7d7d80" stroke-width="2.6" fill="none" stroke-linejoin="round"/><circle cx="9" cy="10" r="1.5" fill="#7d7d80"/><circle cx="13" cy="10" r="1.5" fill="#7d7d80"/><circle cx="17" cy="10" r="1.5" fill="#7d7d80"/></svg>
<div class="t " id="t81" style="left:1362.46px;top:1181.09px;font-size:24.30px;line-height:24.30px;font-weight:400;color:#2e2f38;letter-spacing:0.000px;;transform:scaleX(1.0443);transform-origin:left">eichmann10@example.org</div>
<div class="r" style="left:1679px;top:1175.06px;width:32px;height:32px;border-radius:50%;background:#fdf1f0"></div>
<svg class="r" style="left:1684.00px;top:1180.06px;width:22.00px;height:22.00px" viewBox="0 0 22 22"><path d="M6 6 L16 16 M16 6 L6 16" stroke="#e0533d" stroke-width="2.4" stroke-linecap="round"/></svg>
<svg class="r" style="left:1854.00px;top:1173.46px;width:35.00px;height:35.00px" viewBox="0 0 35 35"><rect width="35" height="35" rx="6" fill="#0a0a0a"/><circle cx="17.6" cy="17.8" r="12.6" stroke="#f2f2f2" stroke-width="1.8" fill="none"/><path d="M8.5 24 L12.5 13.5 L15 17 L17.5 9.5 L22.5 16 L24.5 13.5 L28 18" stroke="#f2f2f2" stroke-width="1.6" fill="none" stroke-linejoin="round"/><path d="M9.5 25.5 Q18 21 24.5 17.5 L31.5 21.5 Q24 25 17 26" stroke="#f2f2f2" stroke-width="1.6" fill="none" stroke-linejoin="round"/><path d="M11 27.5 Q18 29 25 26.5" stroke="#d8d8d8" stroke-width="1.3" fill="none"/></svg>
<div class="t " id="t82" style="left:1900.86px;top:1181.09px;font-size:24.30px;line-height:24.30px;font-weight:400;color:#2e2f38;letter-spacing:0.000px;;transform:scaleX(1.0683);transform-origin:left">Marketing Admin</div>
<div class="t " id="t83" style="left:2190.00px;top:1178.80px;font-size:27.00px;line-height:27.00px;font-weight:400;color:#2e2f38;letter-spacing:0.000px;">2</div>
<div class="t " id="t84" style="left:2322.00px;top:1178.80px;font-size:27.00px;line-height:27.00px;font-weight:400;color:#2e2f38;letter-spacing:0.000px;">1</div>
<div class="r" style="left:2479.6px;top:1180.31px;width:21.5px;height:21.5px;border-radius:50%;background:#1a9a85"></div>
<div class="clip" style="left:2510px;top:1166.66px;width:90.7px;height:50px"><div class="t" style="left:8.3px;top:12.14px;font-size:27px;line-height:27px;color:#2e2f38">Google</div></div>
<div class="cb" style="left:546.8px;top:1319.10px"></div>
<div class="r" style="left:603.90px;top:1291.00px;width:83.10px;height:83.20px;background:#2bbcd4;border-radius:7px"></div>
<div class="ab big" style="left:603.9px;top:1291.00px;width:83.1px;height:83.2px;line-height:83.2px">JW</div>
<div class="t " id="t85" style="left:716.90px;top:1298.74px;font-size:27.00px;line-height:27.00px;font-weight:700;color:#1e1f2e;letter-spacing:0.000px;;transform:scaleX(0.9559);transform-origin:left">Jeanie Wolff</div>
<div class="t " id="t86" style="left:715.85px;top:1342.26px;font-size:23.67px;line-height:23.67px;font-weight:400;color:#45464e;letter-spacing:0.000px;;transform:scaleX(1.0516);transform-origin:left">Don't forget: Jeanie ...</div>
<div class="dv" style="left:974px;top:1277.00px;height:111px"></div>
<div class="dv" style="left:1336.5px;top:1292.50px;height:82px"></div>
<div class="dv" style="left:1831.0px;top:1292.50px;height:82px"></div>
<div class="dv" style="left:2164.3px;top:1292.50px;height:82px"></div>
<div class="dv" style="left:2297.0px;top:1292.50px;height:82px"></div>
<div class="dv" style="left:2450.0px;top:1292.50px;height:82px"></div>
<div class="t " id="t87" style="left:999.40px;top:1320.24px;font-size:27.00px;line-height:27.00px;font-weight:400;color:#2e2f38;letter-spacing:0.000px;;transform:scaleX(1.0485);transform-origin:left">1-285-806-2025</div>
<svg class="r" style="left:1239.60px;top:1319.50px;width:30px;height:30px" viewBox="0 0 26 26"><path d="M3 3.5 Q3 2 4.5 2 L21.5 2 Q23 2 23 3.5 L23 16.5 Q23 18 21.5 18 L11 18 L7.5 22 L7.5 18 L4.5 18 Q3 18 3 16.5 Z" stroke="#7d7d80" stroke-width="2.6" fill="none" stroke-linejoin="round"/><circle cx="9" cy="10" r="1.5" fill="#7d7d80"/><circle cx="13" cy="10" r="1.5" fill="#7d7d80"/><circle cx="17" cy="10" r="1.5" fill="#7d7d80"/></svg>
<div class="t " id="t88" style="left:1364.55px;top:1322.53px;font-size:24.30px;line-height:24.30px;font-weight:400;color:#2e2f38;letter-spacing:0.000px;;transform:scaleX(1.0459);transform-origin:left">wolff33@example.net</div>
<svg class="r" style="left:1854.00px;top:1314.90px;width:35.00px;height:35.00px" viewBox="0 0 35 35"><defs><clipPath id="cc5"><rect width="35" height="35" rx="6"/></clipPath></defs><g clip-path="url(#cc5)"><rect width="35" height="35" fill="#d9d6d0"/><path d="M8 30 Q5 8 17 5 Q29 5 28 20 Q28 28 31 33 L8 33 Z" fill="#231a16"/><ellipse cx="17.5" cy="15.5" rx="5.5" ry="7" fill="#8a5a42"/><path d="M2 35 Q4 27 12 26 L23 26 Q32 27 34 35 Z" fill="#d8292b"/><rect x="29" y="4" width="1.5" height="20" fill="#333"/></g></svg>
<div class="t " id="t89" style="left:1901.94px;top:1322.53px;font-size:24.30px;line-height:24.30px;font-weight:400;color:#2e2f38;letter-spacing:0.000px;;transform:scaleX(1.0591);transform-origin:left">Christie Worthington</div>
<div class="t " id="t90" style="left:2190.00px;top:1320.24px;font-size:27.00px;line-height:27.00px;font-weight:400;color:#2e2f38;letter-spacing:0.000px;">5</div>
<div class="t " id="t91" style="left:2323.00px;top:1320.24px;font-size:27.00px;line-height:27.00px;font-weight:400;color:#2e2f38;letter-spacing:0.000px;">0</div>
<div class="r" style="left:2479.6px;top:1321.75px;width:21.5px;height:21.5px;border-radius:50%;background:#1a9a85"></div>
<div class="clip" style="left:2510px;top:1308.10px;width:90.7px;height:50px"><div class="t" style="left:8.3px;top:12.14px;font-size:27px;line-height:27px;color:#2e2f38">Google</div></div>
<div class="r" style="left:2624px;top:89px;width:8px;height:1309px;background:linear-gradient(to right, rgba(0,0,0,0), rgba(0,0,0,.035))"></div>
<div class="r" style="left:2631px;top:36px;width:722px;height:1415px;background:#cfd0d3;box-shadow:0 3px 6px rgba(0,0,0,.07)"></div>
<div class="r" style="left:2632.00px;top:36.00px;width:720.00px;height:1414.00px;background:#eef0f2"></div>
<div class="r" style="left:2632.00px;top:174.00px;width:18.00px;height:1276.00px;background:linear-gradient(to right, rgba(0,0,0,.035), rgba(0,0,0,0))"></div>
<div class="r" style="left:2632.00px;top:36.00px;width:720.00px;height:138.00px;background:#3d6ce2"></div>
<div class="t " id="t92" style="left:2676.00px;top:90.25px;font-size:30.06px;line-height:30.06px;font-weight:700;color:#ffffff;letter-spacing:0.000px;;transform:scaleX(0.9480);transform-origin:left">What's Next?</div>
<svg class="r" style="left:3165.00px;top:88.50px;width:32.00px;height:32.00px" viewBox="0 0 32 32"><g fill="#fff"><rect x="13.4" y="2.6" width="5.2" height="8" rx="2.6" transform="rotate(0 16 16)"/><rect x="13.4" y="2.6" width="5.2" height="8" rx="2.6" transform="rotate(45 16 16)"/><rect x="13.4" y="2.6" width="5.2" height="8" rx="2.6" transform="rotate(90 16 16)"/><rect x="13.4" y="2.6" width="5.2" height="8" rx="2.6" transform="rotate(135 16 16)"/><rect x="13.4" y="2.6" width="5.2" height="8" rx="2.6" transform="rotate(180 16 16)"/><rect x="13.4" y="2.6" width="5.2" height="8" rx="2.6" transform="rotate(225 16 16)"/><rect x="13.4" y="2.6" width="5.2" height="8" rx="2.6" transform="rotate(270 16 16)"/><rect x="13.4" y="2.6" width="5.2" height="8" rx="2.6" transform="rotate(315 16 16)"/></g><circle cx="16" cy="16" r="9" fill="#fff"/><circle cx="16" cy="16" r="3.9" fill="#3d6ce2"/></svg>
<svg class="r" style="left:3257.00px;top:91.00px;width:28.00px;height:28.00px" viewBox="0 0 28 28"><path d="M6 6 L22 22 M22 6 L6 22" stroke="#fff" stroke-width="4.2" stroke-linecap="round"/></svg>
<div class="t " id="t93" style="left:2675.03px;top:226.64px;font-size:32.67px;line-height:32.67px;font-weight:700;color:#34353d;letter-spacing:0.000px;;transform:scaleX(0.9841);transform-origin:left">Notifications</div>
<div class="t " id="t94" style="left:3124.00px;top:230.23px;font-size:23.00px;line-height:23.00px;font-weight:700;color:#7a809e;letter-spacing:0.000px;;transform:scaleX(0.8663);transform-origin:left">SHOW MORE</div>
<div class="r" style="left:3266.20px;top:220.50px;width:43px;height:43px;border-radius:50%;background:#fff;color:#111;font-size:22px;font-weight:700;line-height:43px;text-align:center">3</div>
<div class="t " id="t95" style="left:2677.00px;top:732.34px;font-size:32.67px;line-height:32.67px;font-weight:700;color:#34353d;letter-spacing:0.000px;;transform:scaleX(0.9577);transform-origin:left">Action Plans</div>
<div class="t " id="t96" style="left:3122.00px;top:735.93px;font-size:23.00px;line-height:23.00px;font-weight:700;color:#7a809e;letter-spacing:0.000px;;transform:scaleX(0.8663);transform-origin:left">SHOW MORE</div>
<div class="r" style="left:3266.20px;top:726.20px;width:43px;height:43px;border-radius:50%;background:#fff;color:#111;font-size:22px;font-weight:700;line-height:43px;text-align:center">2</div>
<div class="r" style="left:2705.60px;top:645.00px;width:574.40px;height:21.00px;background:#dfe1e5;border-radius:0 0 6px 6px"></div>
<div class="r" style="left:2690.00px;top:645.00px;width:605.00px;height:13.50px;background:#e6e8eb;border-radius:0 0 6px 6px;box-shadow:0 1px 1px rgba(0,0,0,.06)"></div>
<div class="r" style="left:2676px;top:310.00px;width:633px;height:339.00px;background:#fff;border-radius:7px;box-shadow:0 1px 2px rgba(0,0,0,.08)"></div>
<div class="t " id="t97" style="left:2705.64px;top:342.73px;font-size:25.60px;line-height:25.60px;font-weight:400;color:#34353d;letter-spacing:0.000px;;transform:scaleX(0.9586);transform-origin:left">CRM /</div>
<div class="t " id="t98" style="right:139.80px;top:344.90px;font-size:23.04px;line-height:23.04px;font-weight:400;color:#34353d;letter-spacing:0.000px;;transform:scaleX(1.1075);transform-origin:right">a few seconds ago</div>
<div class="t " id="t99" style="left:2705.56px;top:404.67px;font-size:25.20px;line-height:25.20px;font-weight:700;color:#1e1f2e;letter-spacing:0.000px;;transform:scaleX(1.0404);transform-origin:left">Elianna Smith</div>
<div class="t " id="t100" style="left:2704.40px;top:442.13px;font-size:24.30px;line-height:24.30px;font-weight:400;color:#767b90;letter-spacing:0.000px;;transform:scaleX(1.0990);transform-origin:left">Elianna has been assigned to you. ...</div>
<div class="t " id="t101" style="left:2705.45px;top:472.43px;font-size:24.30px;line-height:24.30px;font-weight:400;color:#767b90;letter-spacing:0.000px;text-decoration:underline;text-decoration-thickness:2px;text-underline-offset:3px;transform:scaleX(1.1540);transform-origin:left">more details</div>
<div class="r" style="left:3188.50px;top:404.40px;width:89.80px;height:89.80px;background:#f6b92b;border-radius:8px"></div>
<div class="ab" style="left:3188.5px;top:404.4px;width:89.8px;height:89.8px;line-height:89.8px;font-size:43px;transform:scaleX(.8)">ES</div>
<div class="r" style="left:2706.30px;top:543.30px;width:213.40px;height:75.20px;background:#4884e0;border-radius:38px"></div>
<div class="t " id="t102" style="left:2743.90px;top:568.00px;font-size:28.35px;line-height:28.35px;font-weight:700;color:#ffffff;letter-spacing:0.000px;;transform:scaleX(1.0081);transform-origin:left">View Lead</div>
<div class="r" style="left:3107.8px;top:544px;width:170.5px;height:74px;box-sizing:border-box;border:2px solid #e2e3e5;border-radius:38px;background:#fff"></div>
<div class="t " id="t103" style="left:3145.12px;top:568.00px;font-size:28.35px;line-height:28.35px;font-weight:700;color:#2e2f38;letter-spacing:0.000px;;transform:scaleX(0.8817);transform-origin:left">Dismiss</div>
<div class="r" style="left:2705.60px;top:1146.70px;width:574.40px;height:21.00px;background:#dfe1e5;border-radius:0 0 6px 6px"></div>
<div class="r" style="left:2690.00px;top:1146.70px;width:605.00px;height:13.50px;background:#e6e8eb;border-radius:0 0 6px 6px;box-shadow:0 1px 1px rgba(0,0,0,.06)"></div>
<div class="r" style="left:2676px;top:814.60px;width:633px;height:336.10px;background:#fff;border-radius:7px;box-shadow:0 1px 2px rgba(0,0,0,.08)"></div>
<div class="r" style="left:2710.00px;top:849.00px;width:37.30px;height:37.40px;background:#f6b92b;border-radius:5px"></div>
<div class="ab" style="left:2710px;top:849px;width:37.3px;height:37.4px;line-height:37.4px;font-size:15px">ES</div>
<div class="t " id="t104" style="left:2760.98px;top:857.43px;font-size:24.30px;line-height:24.30px;font-weight:400;color:#34353d;letter-spacing:0.000px;;transform:scaleX(1.1107);transform-origin:left">Elianna Smith</div>
<div class="t " id="t105" style="right:140.18px;top:857.43px;font-size:24.30px;line-height:24.30px;font-weight:400;color:#34353d;letter-spacing:0.000px;;transform:scaleX(1.0108);transform-origin:right">A Few Seconds Ago</div>
<div class="t " id="t106" style="left:2705.62px;top:935.13px;font-size:26.55px;line-height:26.55px;font-weight:700;color:#1e1f2e;letter-spacing:0.000px;;transform:scaleX(0.9770);transform-origin:left">Day 1: Review and Accept / Reject....</div>
<div class="t " id="t107" style="left:2705.60px;top:972.41px;font-size:25.74px;line-height:25.74px;font-weight:400;color:#767b90;letter-spacing:0.000px;;transform:scaleX(0.9994);transform-origin:left">Speed To Lead (1 of 12)</div>
<div class="r" style="left:3188.50px;top:920.30px;width:89.80px;height:89.70px;background:#3e54a0;border-radius:8px"></div>
<div class="ab" style="left:3188.5px;top:920.3px;width:89.8px;height:89.7px;line-height:89.7px;font-size:43px;letter-spacing:-2px;transform:scaleX(.82)">D1</div>
<div class="r" style="left:2706.30px;top:1044.00px;width:265.30px;height:74.50px;background:#4884e0;border-radius:38px"></div>
<div class="t " id="t108" style="left:2742.95px;top:1068.00px;font-size:28.35px;line-height:28.35px;font-weight:700;color:#ffffff;letter-spacing:0.000px;;transform:scaleX(0.9545);transform-origin:left">Complete Task</div>
<div class="r" style="left:3028.2px;top:1046.4px;width:168.8px;height:73.8px;box-sizing:border-box;border:2px solid #e2e3e5;border-radius:38px;background:#fff"></div>
<div class="t " id="t109" style="left:3064.84px;top:1069.00px;font-size:28.35px;line-height:28.35px;font-weight:700;color:#2e2f38;letter-spacing:0.000px;;transform:scaleX(0.9628);transform-origin:left">Review</div>
<div class="r" style="left:3204.3px;top:1041.6px;width:74px;height:73.6px;box-sizing:border-box;border:2px solid #e2e3e5;border-radius:50%;background:#fff"></div>
<svg class="r" style="left:3227.00px;top:1063.00px;width:30.00px;height:30.00px" viewBox="0 0 30 30"><path d="M12.5 4.5 C8 5 5.5 8.5 5.5 13 L5.5 22 M2 22.5 L22 22.5 M19 17.5 L19 22.5" stroke="#7d7d80" stroke-width="3" fill="none" stroke-linecap="round" stroke-linejoin="round"/><path d="M9.5 24 L12 27.5 L14.5 24 Z" fill="#7d7d80" stroke="#7d7d80" stroke-width="1.5" stroke-linejoin="round"/><path d="M18 2.5 L26 2.5 L18.5 10.5 L26.5 10.5" stroke="#7d7d80" stroke-width="3" fill="none" stroke-linecap="round" stroke-linejoin="round"/></svg>
</body></html>
